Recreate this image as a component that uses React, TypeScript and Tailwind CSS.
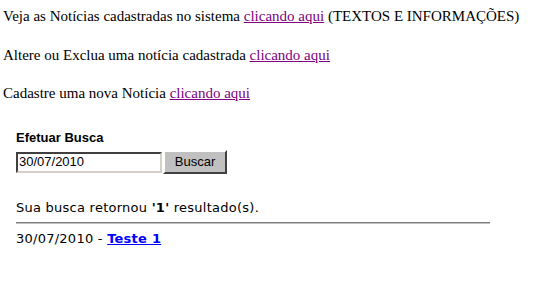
export default function App() {
  return (
    <div className="bg-white w-[541px] h-[294px] pl-[3px] pt-[7px] whitespace-nowrap" style={{ fontFamily: '"Liberation Serif", serif' }}>
      <p className="text-[15px] leading-[18px] text-black">
        Veja as Notícias cadastradas no sistema <a href="#" className="text-[#800080] underline">clicando aqui</a> (TEXTOS E INFORMAÇÕES)
      </p>
      <p className="text-[15px] leading-[18px] text-black mt-[21px]">
        Altere ou Exclua uma notícia cadastrada <a href="#" className="text-[#800080] underline">clicando aqui</a>
      </p>
      <p className="text-[15px] leading-[18px] text-black mt-[20px]">
        Cadastre uma nova Notícia <a href="#" className="text-[#800080] underline">clicando aqui</a>
      </p>
      <div className="ml-[13px] mt-[28px]">
        <div className="text-[13px] leading-[15px] font-bold text-black" style={{ fontFamily: '"Liberation Sans", Arial, sans-serif' }}>
          Efetuar Busca
        </div>
        <div className="flex items-center mt-[5px]">
          <div className="w-[146px] h-[21px] border-2 border-t-[#404040] border-l-[#404040] border-b-[#d4d0c8] border-r-[#d4d0c8] bg-white flex items-center pl-[1px] text-[13px] text-black" style={{ fontFamily: '"Liberation Sans", Arial, sans-serif' }}>
            30/07/2010
          </div>
          <button className="ml-[1px] w-[64px] h-[24px] bg-[#c0c0c0] border-2 border-t-white border-l-white border-b-[#404040] border-r-[#404040] text-[13px] text-black" style={{ fontFamily: '"Liberation Sans", Arial, sans-serif' }}>
            Buscar
          </button>
        </div>
        <div style={{ fontFamily: '"DejaVu Sans", Verdana, sans-serif' }} className="text-[13px] text-black tracking-[0.25px]">
          <div className="mt-[26px] leading-[16px]">
            Sua busca retornou <b>'1'</b> resultado(s).
          </div>
          <div className="mt-[6px] w-[474px] h-[2px] border-t border-t-[#808080] border-b border-b-[#c0c0c0]" />
          <div className="mt-[7px] leading-[16px]">
            30/07/2010 - <a href="#" className="text-[#0000ff] font-bold underline">Teste 1</a>
          </div>
        </div>
      </div>
    </div>
  );
}
